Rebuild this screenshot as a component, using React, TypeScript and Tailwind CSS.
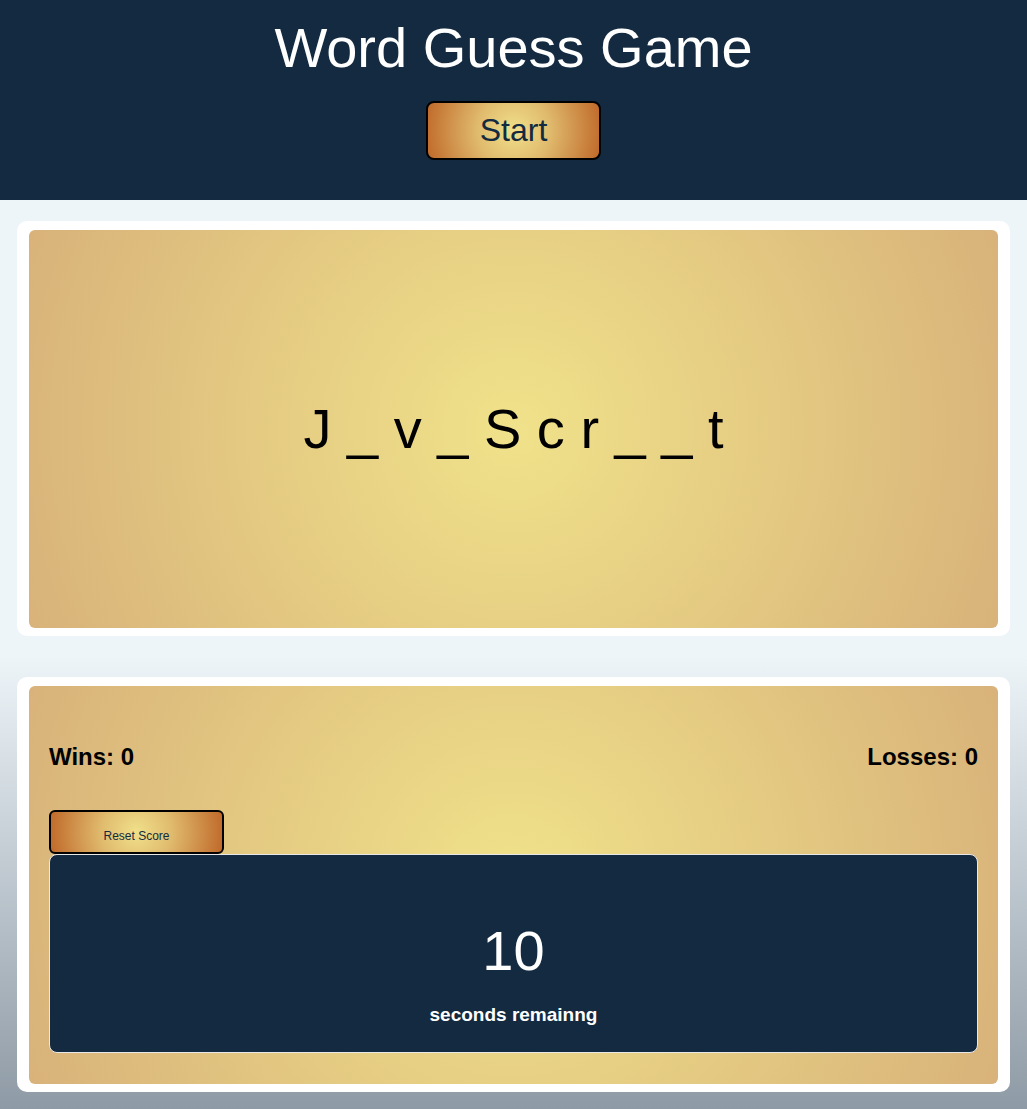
const word = ["J", "_", "v", "_", "S", "c", "r", "_", "_", "t"];

const Card = ({ children, className }: { children: React.ReactNode; className?: string }) => (
  <div className="bg-white rounded-[10px] px-3 pt-[9px] pb-2">
    <div
      className={`h-[398px] rounded-[6px] bg-[radial-gradient(circle_at_center,#f0e28a_0%,#d8b27a_100%)] ${className ?? ""}`}
    >
      {children}
    </div>
  </div>
);

export default function App() {
  return (
    <div className="min-h-[1109px] font-['Liberation_Sans',Arial,sans-serif] flex flex-col">
      <header className="bg-[#132a40] h-[200px] pt-4 flex flex-col items-center">
        <h1 className="text-white text-[56px] leading-[64px]">Word Guess Game</h1>
        <button className="mt-[21px] w-[175px] h-[59px] rounded-[8px] border-2 border-black text-[#132a40] text-[32px] leading-[37px] bg-[radial-gradient(circle_at_center,#f0e08a_0%,#e0bb6e_40%,#c0692a_100%)]">
          Start
        </button>
      </header>

      <main className="flex-1 bg-[linear-gradient(to_bottom,#eef5f9_50%,#8e9aa5_100%)] pt-[21px] pb-[17px] px-[17px] flex flex-col gap-[41px]">
        <Card className="flex items-center justify-center">
          <p className="text-black text-[56px] leading-none">{word.join(" ")}</p>
        </Card>

        <Card className="px-5 pt-[57px] flex flex-col">
          <div className="flex justify-between text-black font-bold text-[24px] leading-[28px]">
            <span>Wins: 0</span>
            <span>Losses: 0</span>
          </div>
          <button className="mt-[39px] w-[175px] h-[44px] rounded-[6px] border-2 border-black text-[#132a40] text-[12px] leading-[14px] pt-[8px] bg-[radial-gradient(circle_at_center,#f0e08a_0%,#e0bb6e_40%,#c0692a_100%)]">
            Reset Score
          </button>
          <div className="h-[199px] bg-[#132a40] border border-[#e8e8e8] rounded-[8px] pt-[64px] flex flex-col items-center text-white">
            <span className="text-[56px] leading-[64px]">10</span>
            <span className="mt-[21px] font-bold text-[19px] leading-[22px]">seconds remainng</span>
          </div>
        </Card>
      </main>
    </div>
  );
}
